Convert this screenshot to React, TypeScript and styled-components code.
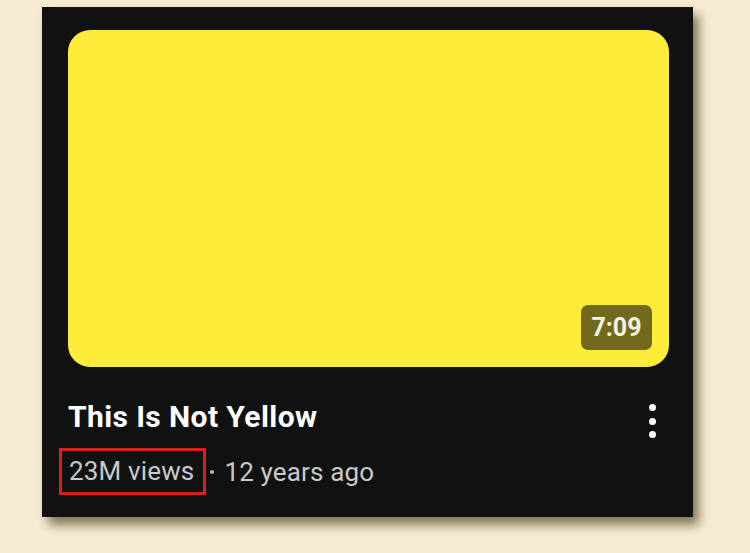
import React from "react";
import styled, { createGlobalStyle } from "styled-components";

const Global = createGlobalStyle`
  html, body { margin: 0; padding: 0; background: #f7ecd3; }
  body { font-family: Roboto, "Liberation Sans", Arial, sans-serif; }
`;

const Page = styled.div`
  width: 750px;
  height: 553px;
  padding: 7px 0 0 42px;
  box-sizing: border-box;
  background: #f7ecd3;
`;

const Card = styled.div`
  width: 651px;
  height: 510px;
  box-sizing: border-box;
  background: #111111;
  padding: 23px 24px 0 26px;
  box-shadow: 6px 8px 10px rgba(70, 58, 25, 0.65);
  display: flex;
  flex-direction: column;
`;

const Thumb = styled.div`
  position: relative;
  height: 337px;
  border-radius: 22px;
  background: #feec3a;
`;

const Duration = styled.div`
  position: absolute;
  right: 17px;
  bottom: 17px;
  width: 71px;
  height: 45px;
  border-radius: 7px;
  background: #716a1c;
  color: #f4f2e4;
  font-weight: 700;
  font-size: 25px;
  display: flex;
  align-items: center;
  justify-content: center;
`;

const InfoRow = styled.div`
  display: flex;
  justify-content: space-between;
  align-items: flex-start;
  padding-top: 33px;
`;

const Texts = styled.div`
  display: flex;
  flex-direction: column;
`;

const Title = styled.div`
  color: #ffffff;
  font-weight: 700;
  font-size: 30px;
  line-height: 34px;
  letter-spacing: 0.4px;
`;

const Meta = styled.div`
  display: flex;
  align-items: center;
  margin-top: 14px;
  margin-left: -9px;
  color: #c9c9c9;
  font-size: 26px;
  letter-spacing: 0.15px;
`;

const Highlight = styled.span`
  border: 3px solid #d8211e;
  padding: 6px 9px 7px 7px;
  line-height: 28px;
`;

const Sep = styled.span`
  width: 4px;
  height: 4px;
  border-radius: 50%;
  background: #b8b8b8;
  margin: 0 10px 0 4px;
`;

const Menu = styled.div`
  display: flex;
  flex-direction: column;
  gap: 6.5px;
  margin-top: 4px;
  margin-right: 13px;
`;

const Dot = styled.span`
  width: 7px;
  height: 7px;
  border-radius: 50%;
  background: #ffffff;
`;

export default function App() {
  return (
    <>
      <Global />
      <Page>
        <Card>
          <Thumb>
            <Duration>7:09</Duration>
          </Thumb>
          <InfoRow>
            <Texts>
              <Title>This Is Not Yellow</Title>
              <Meta>
                <Highlight>23M views</Highlight>
                <Sep />
                <span>12 years ago</span>
              </Meta>
            </Texts>
            <Menu>
              <Dot />
              <Dot />
              <Dot />
            </Menu>
          </InfoRow>
        </Card>
      </Page>
    </>
  );
}
